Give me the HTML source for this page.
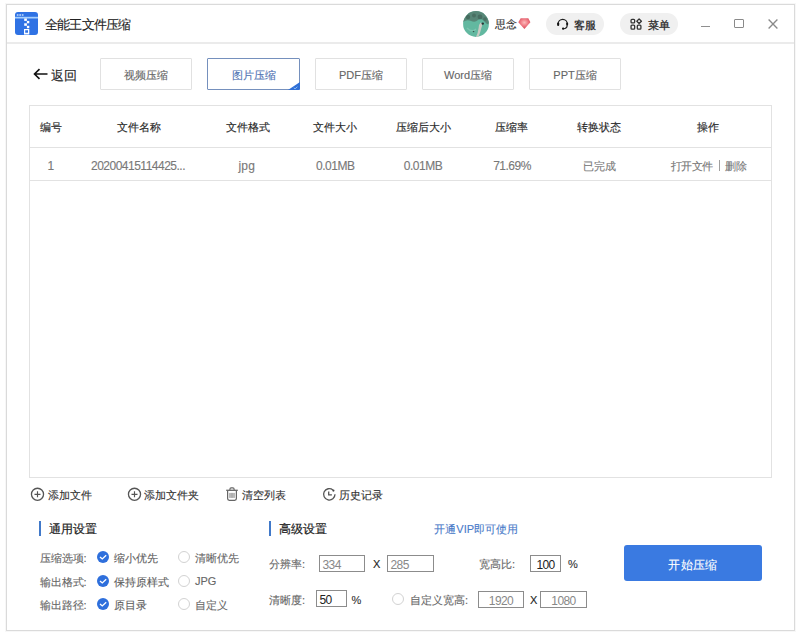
<!DOCTYPE html>
<html><head><meta charset="utf-8">
<style>
*{box-sizing:border-box;margin:0;padding:0}
html,body{width:800px;height:636px;background:#fff;overflow:hidden;font-family:"Liberation Sans",sans-serif;color:#333}
.a{position:absolute;white-space:nowrap;-webkit-text-stroke:0.12px currentColor}
.med{-webkit-text-stroke:0.25px currentColor}
</style></head><body>
<div class="a" style="left:5px;top:3px;width:791px;height:629px;border:1px solid rgba(0,0,0,0.03)"></div>
<div class="a" style="left:6px;top:4px;width:789px;height:627px;border:1px solid #dadada;background:#fff"></div>
<svg class="a" style="left:15px;top:12px" width="23" height="23" viewBox="0 0 23 23">
<rect x="0" y="0" width="23" height="23" rx="3" fill="#2f72e4"/>
<rect x="0" y="4.8" width="23" height="1.7" fill="#a6cffd"/>
<rect x="1.8" y="2.2" width="1.7" height="1.6" fill="#bcd6fb"/><rect x="4.3" y="2.2" width="1.7" height="1.6" fill="#bcd6fb"/><rect x="6.8" y="2.2" width="1.7" height="1.6" fill="#bcd6fb"/>
<rect x="9.2" y="6.5" width="2.7" height="2.4" fill="#fff"/><rect x="11.9" y="8.9" width="2.4" height="2.4" fill="#fff"/><rect x="9.2" y="11.3" width="2.7" height="2.5" fill="#fff"/><rect x="11.9" y="13.8" width="2.4" height="2.4" fill="#fff"/>
<path d="M9 16.9H14.3V22.6H9Z M10.2 18.3V20.7H13V18.3Z" fill="#fff" fill-rule="evenodd"/>
</svg>
<div class="a" style="left:45px;top:18px;font-size:13px;line-height:13px;color:#222;letter-spacing:-0.8px;">全能王文件压缩</div>
<svg class="a" style="left:463px;top:10.7px" width="26" height="26" viewBox="0 0 26 26">
<defs><clipPath id="av"><circle cx="13" cy="13" r="12.9"/></clipPath><filter id="bl" x="-10%" y="-10%" width="120%" height="120%"><feGaussianBlur stdDeviation="0.55"/></filter></defs>
<g clip-path="url(#av)"><rect width="26" height="26" fill="#62b8a0"/>
<g filter="url(#bl)">
<path d="M0 11Q4 8 8 10T15 9T22 11T26 10V0H0Z" fill="#557e70" opacity="0.85"/>
<circle cx="5" cy="6" r="2.2" fill="#3b5a4f" opacity="0.6"/><circle cx="11" cy="4.5" r="2" fill="#3b5a4f" opacity="0.5"/><circle cx="17" cy="6" r="2.4" fill="#3b5a4f" opacity="0.55"/><circle cx="22" cy="8" r="1.8" fill="#3b5a4f" opacity="0.5"/>
<path d="M17.5 11.5Q19.5 12 19 15Q18 18 17.3 21Q16.5 24 15 26H13Q15 22 15.6 17Q16 13 17.5 11.5Z" fill="#d9cdc8" opacity="0.85"/>
<circle cx="19.8" cy="12.6" r="1.2" fill="#2a3333"/>
<circle cx="10.5" cy="20.5" r="0.8" fill="#2f4a42"/>
<path d="M4 17Q9 22 13 18" stroke="#93d3bf" stroke-width="1.4" fill="none" opacity="0.5"/>
</g></g></svg>
<div class="a" style="left:495px;top:19px;font-size:11px;line-height:11px;color:#333;">思念</div>
<svg class="a" style="left:518px;top:18px" width="13" height="11" viewBox="0 0 13 11"><defs><radialGradient id="dg" cx="0.5" cy="0.4" r="0.55"><stop offset="0" stop-color="#fbbcbc"/><stop offset="0.55" stop-color="#f07c86"/><stop offset="1" stop-color="#d9505f"/></radialGradient></defs><path d="M2.7 0.3H10.3L12.4 4.2L6.4 10.9L0.3 4.2Z" fill="url(#dg)"/></svg>
<div class="a" style="left:546px;top:13px;width:58px;height:22px;border-radius:11px;background:#f0f0f0"></div>
<svg class="a" style="left:553px;top:15px" width="20" height="18" viewBox="0 0 20 18"><path d="M5.1 9A4.6 4.6 0 0 1 14.3 9" fill="none" stroke="#222" stroke-width="1.25"/><rect x="4.1" y="7.4" width="2.1" height="3.5" rx="1" fill="#111"/><rect x="13.2" y="7.5" width="1.9" height="3.2" rx="0.9" fill="#111"/><path d="M14.2 10.4Q14 13.6 10.6 13.8" fill="none" stroke="#222" stroke-width="1.1"/><circle cx="10.1" cy="13.7" r="1.15" fill="#111"/></svg>
<div class="a" style="left:574px;top:19.5px;font-size:11px;line-height:11px;color:#222;-webkit-text-stroke:0.25px #222;">客服</div>
<div class="a" style="left:620px;top:13px;width:58px;height:22px;border-radius:11px;background:#f0f0f0"></div>
<svg class="a" style="left:630px;top:18px" width="13" height="13" viewBox="0 0 13 13"><g fill="none" stroke="#333" stroke-width="1.3"><rect x="1.05" y="1.35" width="3.6" height="3.6" rx="0.9"/><path d="M9.1 0.9L11.4 3.2L9.1 5.5L6.8 3.2Z" stroke-linejoin="round"/><rect x="1.05" y="7.1" width="3.6" height="4" rx="0.9"/><rect x="7.3" y="7.1" width="3.6" height="4" rx="0.9"/></g></svg>
<div class="a" style="left:648px;top:19.5px;font-size:11px;line-height:11px;color:#222;-webkit-text-stroke:0.25px #222;">菜单</div>
<div class="a" style="left:700.5px;top:26px;width:9.5px;height:1.4px;background:#8f8f8f"></div>
<div class="a" style="left:734px;top:19px;width:9.5px;height:9px;border:1.2px solid #8a8a8a;border-radius:1px"></div>
<svg class="a" style="left:767.5px;top:19px" width="10" height="10" viewBox="0 0 10 10"><path d="M0.6 0.6L9.4 9.4M9.4 0.6L0.6 9.4" stroke="#8a8a8a" stroke-width="1.35"/></svg>
<div class="a" style="left:7px;top:42px;width:787px;height:2px;background:#ebebeb"></div>
<svg class="a" style="left:33px;top:68px" width="15" height="12" viewBox="0 0 15 12"><path d="M14.5 6H1.8M6.5 1.2L1.5 6L6.5 10.8" fill="none" stroke="#111" stroke-width="1.6"/></svg>
<div class="a" style="left:51px;top:69.5px;font-size:12.5px;line-height:12.5px;color:#222;letter-spacing:-0.3px;">返回</div>
<div class="a" style="left:100px;top:58px;width:92px;height:32px;border:1px solid #e1e1e1;border-radius:1px"></div>
<div class="a" style="left:66.0px;top:70px;font-size:11px;line-height:11px;color:#666;width:160px;text-align:center;">视频压缩</div>
<div class="a" style="left:207px;top:58px;width:93px;height:32px;border:1px solid #7590bd;border-radius:1px"></div>
<div class="a" style="left:173.5px;top:70px;font-size:11px;line-height:11px;color:#5274b4;width:160px;text-align:center;">图片压缩</div>
<div class="a" style="left:315px;top:58px;width:92px;height:32px;border:1px solid #e1e1e1;border-radius:1px"></div>
<div class="a" style="left:281.0px;top:70px;font-size:11px;line-height:11px;color:#666;width:160px;text-align:center;">PDF压缩</div>
<div class="a" style="left:422px;top:58px;width:92px;height:32px;border:1px solid #e1e1e1;border-radius:1px"></div>
<div class="a" style="left:388.0px;top:70px;font-size:11px;line-height:11px;color:#666;width:160px;text-align:center;">Word压缩</div>
<div class="a" style="left:529px;top:58px;width:92px;height:32px;border:1px solid #e1e1e1;border-radius:1px"></div>
<div class="a" style="left:495.0px;top:70px;font-size:11px;line-height:11px;color:#666;width:160px;text-align:center;">PPT压缩</div>
<svg class="a" style="left:288px;top:82px" width="12" height="8" viewBox="0 0 12 8"><path d="M12 0V6.5Q12 8 10.5 8H0Z" fill="#2f6fd6"/><path d="M5.8 5.9L7.1 6.8L9.4 4.8" fill="none" stroke="#9cc4f5" stroke-width="0.9"/></svg>
<div class="a" style="left:29px;top:105px;width:743px;height:373px;border:1px solid #e2e2e2"></div>
<div class="a" style="left:30px;top:147px;width:741px;height:1px;background:#e2e2e2"></div>
<div class="a" style="left:30px;top:180px;width:741px;height:1px;background:#e2e2e2"></div>
<div class="a" style="left:-29.5px;top:122px;font-size:11px;line-height:11px;color:#2a2a2a;width:160px;text-align:center;-webkit-text-stroke:0.15px #2a2a2a;">编号</div>
<div class="a" style="left:59px;top:122px;font-size:11px;line-height:11px;color:#2a2a2a;width:160px;text-align:center;-webkit-text-stroke:0.15px #2a2a2a;">文件名称</div>
<div class="a" style="left:167.5px;top:122px;font-size:11px;line-height:11px;color:#2a2a2a;width:160px;text-align:center;-webkit-text-stroke:0.15px #2a2a2a;">文件格式</div>
<div class="a" style="left:255.3px;top:122px;font-size:11px;line-height:11px;color:#2a2a2a;width:160px;text-align:center;-webkit-text-stroke:0.15px #2a2a2a;">文件大小</div>
<div class="a" style="left:343.2px;top:122px;font-size:11px;line-height:11px;color:#2a2a2a;width:160px;text-align:center;-webkit-text-stroke:0.15px #2a2a2a;">压缩后大小</div>
<div class="a" style="left:431.3px;top:122px;font-size:11px;line-height:11px;color:#2a2a2a;width:160px;text-align:center;-webkit-text-stroke:0.15px #2a2a2a;">压缩率</div>
<div class="a" style="left:519.3px;top:122px;font-size:11px;line-height:11px;color:#2a2a2a;width:160px;text-align:center;-webkit-text-stroke:0.15px #2a2a2a;">转换状态</div>
<div class="a" style="left:628px;top:122px;font-size:11px;line-height:11px;color:#2a2a2a;width:160px;text-align:center;-webkit-text-stroke:0.15px #2a2a2a;">操作</div>
<div class="a" style="left:-29.5px;top:159.6px;font-size:12px;line-height:12px;color:#787878;width:160px;text-align:center;letter-spacing:-0.5px;">1</div>
<div class="a" style="left:58px;top:159.6px;font-size:12px;line-height:12px;color:#787878;width:160px;text-align:center;letter-spacing:-0.5px;">20200415114425...</div>
<div class="a" style="left:166.8px;top:159.6px;font-size:12px;line-height:12px;color:#787878;width:160px;text-align:center;letter-spacing:0.2px;">jpg</div>
<div class="a" style="left:255.3px;top:159.6px;font-size:12px;line-height:12px;color:#787878;width:160px;text-align:center;letter-spacing:-0.5px;">0.01MB</div>
<div class="a" style="left:343px;top:159.6px;font-size:12px;line-height:12px;color:#787878;width:160px;text-align:center;letter-spacing:-0.5px;">0.01MB</div>
<div class="a" style="left:432px;top:159.6px;font-size:12px;line-height:12px;color:#787878;width:160px;text-align:center;letter-spacing:-0.5px;">71.69%</div>
<div class="a" style="left:519.8px;top:160.5px;font-size:11px;line-height:11px;color:#787878;width:160px;text-align:center;">已完成</div>
<div class="a" style="left:670.5px;top:160.5px;font-size:11px;line-height:11px;color:#787878;letter-spacing:-0.4px;">打开文件</div>
<div class="a" style="left:719px;top:160px;width:1.2px;height:10.5px;background:#a0a0a0"></div>
<div class="a" style="left:724.8px;top:160.5px;font-size:11px;line-height:11px;color:#787878;">删除</div>
<svg class="a" style="left:27px;top:484px" width="20" height="20" viewBox="0 0 20 20"><circle cx="10.5" cy="10.3" r="6.05" fill="none" stroke="#555" stroke-width="1.3"/><path d="M10.5 7.3V13.3M7.5 10.3H13.5" stroke="#555" stroke-width="1.15"/></svg>
<div class="a" style="left:47.8px;top:490px;font-size:11px;line-height:11px;color:#333;">添加文件</div>
<svg class="a" style="left:123.6px;top:484px" width="20" height="20" viewBox="0 0 20 20"><circle cx="10.5" cy="10.3" r="6.05" fill="none" stroke="#555" stroke-width="1.3"/><path d="M10.5 7.3V13.3M7.5 10.3H13.5" stroke="#555" stroke-width="1.15"/></svg>
<div class="a" style="left:144.2px;top:490px;font-size:11px;line-height:11px;color:#333;">添加文件夹</div>
<svg class="a" style="left:222px;top:484px" width="20" height="20" viewBox="0 0 20 20"><path d="M4.2 6.3H15.8" stroke="#666" stroke-width="1.3"/><path d="M7.9 6V5.1Q7.9 3.9 9.1 3.9H10.9Q12.1 3.9 12.1 5.1V6" fill="none" stroke="#666" stroke-width="1.1"/><path d="M5.6 6.8V14.6Q5.6 16.3 7.3 16.3H12.7Q14.4 16.3 14.4 14.6V6.8" fill="none" stroke="#666" stroke-width="1.2"/><rect x="6.9" y="8.9" width="6.2" height="5" fill="#b9b9b9"/><path d="M10 8.9V13.9" stroke="#999" stroke-width="0.6"/></svg>
<div class="a" style="left:241.8px;top:490px;font-size:11px;line-height:11px;color:#333;">清空列表</div>
<svg class="a" style="left:319px;top:484px" width="20" height="20" viewBox="0 0 20 20"><path d="M16 10.3A5.7 5.7 0 1 1 13.9 5.9" fill="none" stroke="#555" stroke-width="1.3"/><circle cx="14.4" cy="6.6" r="1.1" fill="#444"/><path d="M9.7 7.4V10.9H12.9" fill="none" stroke="#555" stroke-width="1.3"/></svg>
<div class="a" style="left:339px;top:490px;font-size:11px;line-height:11px;color:#333;">历史记录</div>
<div class="a" style="left:39px;top:520.5px;width:2px;height:15px;background:#4179c9"></div>
<div class="a" style="left:48.9px;top:523px;font-size:12px;line-height:12px;color:#222;-webkit-text-stroke:0.2px #222;">通用设置</div>
<div class="a" style="left:269px;top:520.5px;width:2px;height:15px;background:#4179c9"></div>
<div class="a" style="left:279px;top:523px;font-size:12px;line-height:12px;color:#222;-webkit-text-stroke:0.2px #222;">高级设置</div>
<div class="a" style="left:434.3px;top:523.5px;font-size:11px;line-height:11px;color:#4a7bc9;">开通VIP即可使用</div>
<div class="a" style="left:39.5px;top:552.8px;font-size:11px;line-height:11px;color:#666;">压缩选项<span style="font-size:11px">:</span></div>
<svg class="a" style="left:97px;top:551px" width="12" height="12" viewBox="0 0 12 12"><circle cx="6" cy="6" r="6" fill="#2e6fdc"/><path d="M3 5.9L5.3 7.9L9.2 4.3" fill="none" stroke="#fff" stroke-width="1.35"/></svg>
<div class="a" style="left:114px;top:552.8px;font-size:11px;line-height:11px;color:#606060;">缩小优先</div>
<div class="a" style="left:178px;top:551px;width:12px;height:12px;border-radius:50%;border:1px solid #d2d2d2;background:#fff"></div>
<div class="a" style="left:195px;top:552.8px;font-size:11px;line-height:11px;color:#666;">清晰优先</div>
<div class="a" style="left:39.5px;top:577px;font-size:11px;line-height:11px;color:#666;">输出格式<span style="font-size:11px">:</span></div>
<svg class="a" style="left:97px;top:574.8px" width="12" height="12" viewBox="0 0 12 12"><circle cx="6" cy="6" r="6" fill="#2e6fdc"/><path d="M3 5.9L5.3 7.9L9.2 4.3" fill="none" stroke="#fff" stroke-width="1.35"/></svg>
<div class="a" style="left:114px;top:577px;font-size:11px;line-height:11px;color:#606060;">保持原样式</div>
<div class="a" style="left:178px;top:574.8px;width:12px;height:12px;border-radius:50%;border:1px solid #d2d2d2;background:#fff"></div>
<div class="a" style="left:195px;top:576.4px;font-size:11px;line-height:11px;color:#666;">JPG</div>
<div class="a" style="left:39.5px;top:599.6px;font-size:11px;line-height:11px;color:#666;">输出路径<span style="font-size:11px">:</span></div>
<svg class="a" style="left:97px;top:597.8px" width="12" height="12" viewBox="0 0 12 12"><circle cx="6" cy="6" r="6" fill="#2e6fdc"/><path d="M3 5.9L5.3 7.9L9.2 4.3" fill="none" stroke="#fff" stroke-width="1.35"/></svg>
<div class="a" style="left:114px;top:599.6px;font-size:11px;line-height:11px;color:#606060;">原目录</div>
<div class="a" style="left:178px;top:597.8px;width:12px;height:12px;border-radius:50%;border:1px solid #d2d2d2;background:#fff"></div>
<div class="a" style="left:195px;top:599.6px;font-size:11px;line-height:11px;color:#666;">自定义</div>
<div class="a" style="left:269px;top:559px;font-size:11px;line-height:11px;color:#666;">分辨率<span>:</span></div>
<div class="a" style="left:319px;top:555px;width:46px;height:17px;border:1px solid #8c8c8c;-webkit-text-stroke:0;font-size:12px;line-height:18px;letter-spacing:-0.6px;color:#888;padding-left:2.5px;">334</div>
<div class="a" style="left:373px;top:559px;font-size:11px;line-height:11px;color:#222;">X</div>
<div class="a" style="left:387px;top:555px;width:47px;height:17px;border:1px solid #8c8c8c;-webkit-text-stroke:0;font-size:12px;line-height:18px;letter-spacing:-0.6px;color:#888;padding-left:2.5px;">285</div>
<div class="a" style="left:479px;top:559px;font-size:11px;line-height:11px;color:#666;">宽高比<span>:</span></div>
<div class="a" style="left:530px;top:555px;width:31px;height:17px;border:1px solid #8c8c8c;-webkit-text-stroke:0;font-size:12px;line-height:18px;letter-spacing:-0.6px;color:#222;text-align:center;">100</div>
<div class="a" style="left:568px;top:559px;font-size:11px;line-height:11px;color:#333;">%</div>
<div class="a" style="left:269px;top:595px;font-size:11px;line-height:11px;color:#666;">清晰度<span>:</span></div>
<div class="a" style="left:316px;top:590px;width:31px;height:17px;border:1px solid #8c8c8c;-webkit-text-stroke:0;font-size:12px;line-height:18px;letter-spacing:-0.6px;color:#222;padding-left:2.5px;">50</div>
<div class="a" style="left:351.5px;top:595px;font-size:11px;line-height:11px;color:#333;">%</div>
<div class="a" style="left:392px;top:593px;width:12px;height:12px;border-radius:50%;border:1px solid #d2d2d2;background:#fff"></div>
<div class="a" style="left:410px;top:595px;font-size:11px;line-height:11px;color:#666;">自定义宽高<span>:</span></div>
<div class="a" style="left:478px;top:591px;width:46px;height:17px;border:1px solid #8c8c8c;-webkit-text-stroke:0;font-size:12px;line-height:18px;letter-spacing:-0.6px;color:#888;text-align:center;">1920</div>
<div class="a" style="left:530px;top:595px;font-size:11px;line-height:11px;color:#222;">X</div>
<div class="a" style="left:540px;top:591px;width:47px;height:17px;border:1px solid #8c8c8c;-webkit-text-stroke:0;font-size:12px;line-height:18px;letter-spacing:-0.6px;color:#888;text-align:center;">1080</div>
<div class="a" style="left:624px;top:545px;width:138px;height:36px;border-radius:3px;background:#3a7ae1"></div>
<div class="a" style="left:613px;top:559px;font-size:12px;line-height:12px;color:#fff;width:160px;text-align:center;letter-spacing:0.3px;">开始压缩</div>
</body></html>
